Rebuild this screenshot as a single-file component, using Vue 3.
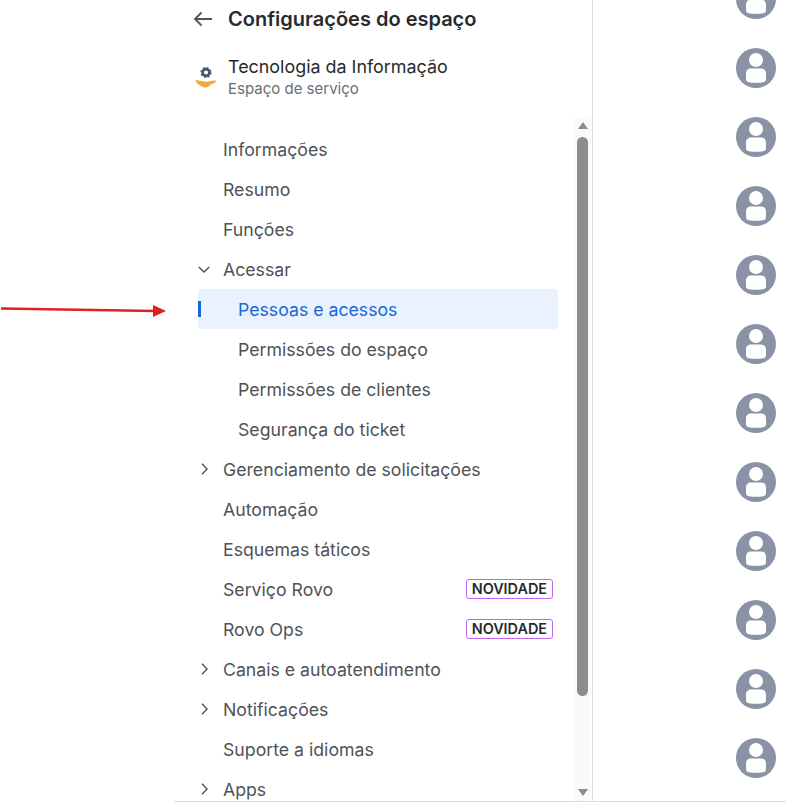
<template>
  <div class="page">
    <div class="arrow-note">
      <svg width="170" height="14" viewBox="0 0 170 14">
        <path d="M1 4.500 L155 7" stroke="#e02020" stroke-width="2.400" fill="none" />
        <path d="M153 1 L166 7 L153 13 Z" fill="#e02020" />
      </svg>
    </div>
    <div class="frame">
      <aside class="panel">
        <header class="head">
          <svg class="back" width="20" height="16" viewBox="0 0 20 16">
            <path d="M19 8H2M8.500 1.500 2 8l6.500 6.500" stroke="#505258" stroke-width="1.800" fill="none" />
          </svg>
          <h1>Configurações do espaço</h1>
        </header>
        <div class="space">
          <svg class="space-icon" width="22" height="24" viewBox="0 0 22 24">
            <circle cx="11" cy="6.500" r="3.400" fill="none" stroke="#44546f" stroke-width="2.600" />
            <circle cx="11" cy="6.500" r="4.800" fill="none" stroke="#44546f" stroke-width="1.600" stroke-dasharray="1.900 1.870" />
            <path d="M.5 14.500 C3 13.500 6 15 8.500 15.200 C10.500 15.300 11 16 12.500 15.800 C15 15.500 18 14 21.500 14.800 C20 17 18 18 16 18.600 C14 20.500 12 22 10 21.600 C7 21 5 19.500 3.500 18.600 C2 17.800 1 16 .5 14.500 Z" fill="#f5a93b" />
          </svg>
          <div>
            <div class="space-name">Tecnologia da Informação</div>
            <div class="space-type">Espaço de serviço</div>
          </div>
        </div>
        <div class="scroller">
          <nav class="nav">
            <a
              v-for="item in items"
              :key="item.label"
              class="row"
              :class="{ child: item.child, active: item.active }"
            >
              <svg v-if="item.caret" class="caret" :class="{ open: item.caret === 'open' }" width="12" height="12" viewBox="0 0 12 12">
                <path d="M4 .8 9 6 4 11.200" stroke="#505258" stroke-width="1.400" fill="none" />
              </svg>
              <span class="label">{{ item.label }}</span>
              <span v-if="item.isNew" class="badge">NOVIDADE</span>
            </a>
          </nav>
          <div class="scrollbar">
            <span class="tri up"></span>
            <span class="thumb"></span>
            <span class="tri down"></span>
          </div>
        </div>
      </aside>
      <main class="people">
        <svg v-for="n in 12" :key="n" class="avatar" width="40" height="40" viewBox="0 0 40 40">
          <circle cx="20" cy="20" r="20" fill="#8993a5" />
          <circle cx="20" cy="12" r="7" fill="#fff" />
          <path d="M10 25.500C10 22.500 12 20.500 15 20.500H25C28 20.500 30 22.500 30 25.500V31C30 33 29 34 27 34.300C23 35 17 35 13 34.300C11 34 10 33 10 31Z" fill="#fff" />
        </svg>
      </main>
    </div>
  </div>
</template>

<script setup>
  const items = [
    { label: 'Informações' },
    { label: 'Resumo' },
    { label: 'Funções' },
    { label: 'Acessar', caret: 'open' },
    { label: 'Pessoas e acessos', child: true, active: true },
    { label: 'Permissões do espaço', child: true },
    { label: 'Permissões de clientes', child: true },
    { label: 'Segurança do ticket', child: true },
    { label: 'Gerenciamento de solicitações', caret: 'closed' },
    { label: 'Automação' },
    { label: 'Esquemas táticos' },
    { label: 'Serviço Rovo', isNew: true },
    { label: 'Rovo Ops', isNew: true },
    { label: 'Canais e autoatendimento', caret: 'closed' },
    { label: 'Notificações', caret: 'closed' },
    { label: 'Suporte a idiomas' },
    { label: 'Apps', caret: 'closed' }
  ];
</script>

<style>
  html, body {
    margin: 0;
    background: #fff;
    overflow: hidden;
  }
</style>

<style scoped>
  .page {
    position: relative;
    width: 786px;
    height: 802px;
    box-sizing: border-box;
    padding-left: 174px;
    overflow: hidden;
    font-family: Inter, "Noto Sans", sans-serif;
    color: #44474d;
  }
  .arrow-note {
    position: absolute;
    left: 0;
    top: 304px;
    line-height: 0;
  }
  .frame {
    display: flex;
    height: 802px;
    box-sizing: border-box;
    border-bottom: 1px solid #dcdcdc;
    overflow: hidden;
  }
  .panel {
    width: 419px;
    box-sizing: border-box;
    height: 100%;
    border-right: 1px solid #dcdcdc;
    display: flex;
    flex-direction: column;
    flex: none;
  }
  .head {
    display: flex;
    align-items: center;
    height: 38px;
    padding-left: 19px;
    gap: 15px;
  }
  .head h1 {
    margin: 0;
    font-size: 20px;
    font-weight: 600;
    color: #292a2e;
  }
  .space {
    display: flex;
    align-items: center;
    gap: 11px;
    margin-top: 17px;
    padding-left: 21px;
    height: 45px;
  }
  .space-icon {
    flex: none;
  }
  .space-name {
    font-size: 17.900px;
    font-weight: 400;
    line-height: 22px;
    color: #292a2e;
  }
  .space-type {
    font-size: 15px;
    line-height: 20px;
    color: #6b6e76;
    padding-top: 1px;
  }
  .scroller {
    flex: 1;
    min-height: 0;
    display: flex;
    margin-top: 18px;
  }
  .nav {
    flex: 1;
    padding: 11px 16px 0 24px;
    overflow: hidden;
  }
  .row {
    position: relative;
    display: flex;
    align-items: center;
    height: 40px;
    padding-left: 25px;
    padding-right: 5px;
    font-size: 17.700px;
    color: #505258;
    border-radius: 4px;
  }
  .row.child {
    padding-left: 40px;
  }
  .row.active {
    background: #e9f2fe;
    color: #1868db;
  }
  .row.active::before {
    content: "";
    position: absolute;
    left: 0;
    top: 12px;
    width: 3px;
    height: 16px;
    background: #1868db;
  }
  .caret {
    position: absolute;
    left: 0;
    top: 14px;
  }
  .caret.open {
    transform: rotate(90deg);
  }
  .label {
    flex: 1;
    white-space: nowrap;
    padding-top: 1px;
  }
  .badge {
    box-sizing: border-box;
    height: 20px;
    padding: 0 5px;
    border: 1px solid #bf63f3;
    border-radius: 3px;
    font-size: 14.400px;
    font-weight: 600;
    line-height: 18px;
    color: #292a2e;
  }
  .scrollbar {
    flex: none;
    width: 17px;
    margin-right: 1px;
    background: #fafafa;
    display: flex;
    flex-direction: column;
    align-items: center;
    position: relative;
  }
  .thumb {
    width: 11px;
    height: 559px;
    margin-top: 19px;
    border-radius: 6px;
    background: #8c8c8c;
  }
  .tri {
    width: 0;
    height: 0;
    border-left: 5px solid transparent;
    border-right: 5px solid transparent;
  }
  .tri.up {
    position: absolute;
    top: 4px;
    border-bottom: 7px solid #8c8c8c;
  }
  .tri.down {
    position: absolute;
    bottom: 5px;
    border-top: 7px solid #8c8c8c;
  }
  .people {
    flex: 1;
    display: flex;
    flex-direction: column;
    align-items: flex-end;
    gap: 29px;
    padding-right: 10px;
    margin-top: -21px;
  }
  .avatar {
    flex: none;
  }
</style>
